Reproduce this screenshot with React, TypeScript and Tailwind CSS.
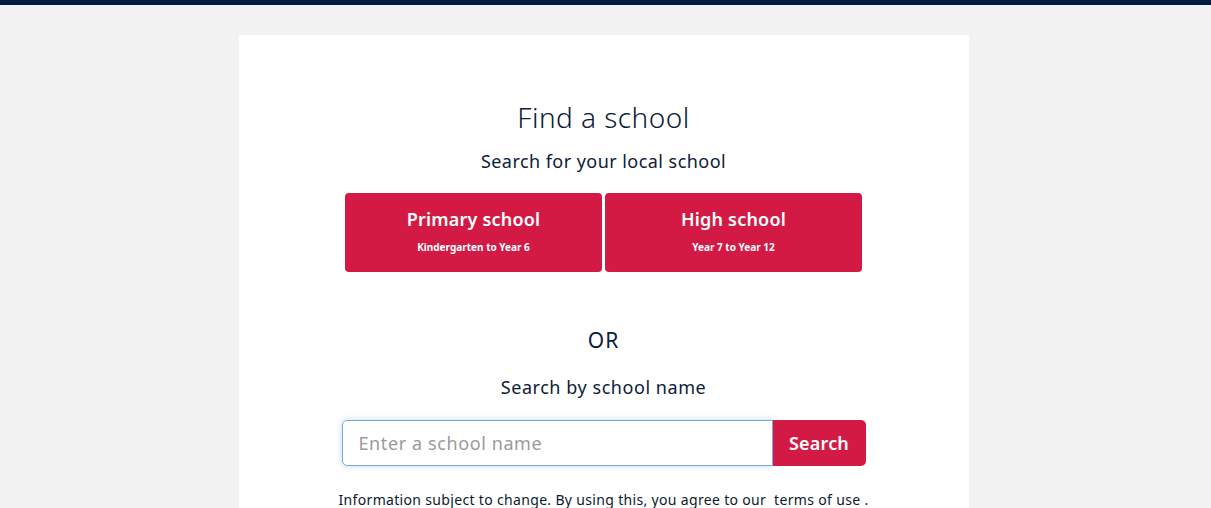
export default function App() {
  return (
    <div className="min-h-screen bg-[#f2f2f2] font-['Noto_Sans',sans-serif] text-[#0c2038]">
      <div className="h-[5px] bg-[#011c3e]" />
      <div className="flex justify-center pt-[30px] pr-[4px]">
        <div className="w-[730px] bg-white flex flex-col items-center pt-[63px] pb-10">
          <h1 className="text-[28px] font-light leading-[38px] tracking-[0.45px]">Find a school</h1>
          <p className="mt-[13px] text-[18px] leading-[24px] tracking-[0.45px]">Search for your local school</p>

          <div className="mt-[20px] flex gap-[3px]">
            <button className="w-[257px] h-[79px] rounded-[4px] bg-[#d31a45] text-white flex flex-col items-center pt-[13px]">
              <span className="text-[18px] font-semibold leading-[26px] tracking-[0.2px]">Primary school</span>
              <span className="mt-[8px] text-[10px] font-bold leading-[14px]">Kindergarten to Year 6</span>
            </button>
            <button className="w-[257px] h-[79px] rounded-[4px] bg-[#d31a45] text-white flex flex-col items-center pt-[13px]">
              <span className="text-[18px] font-semibold leading-[26px] tracking-[0.2px]">High school</span>
              <span className="mt-[8px] text-[10px] font-bold leading-[14px]">Year 7 to Year 12</span>
            </button>
          </div>

          <p className="mt-[54px] text-[21px] leading-[28px] tracking-[1px]">OR</p>
          <p className="mt-[21px] text-[18px] leading-[24px] tracking-[0.55px]">Search by school name</p>

          <div className="mt-[21px] flex">
            <input
              className="w-[431px] h-[46px] rounded-l-[5px] border border-[#74a9dc] shadow-[0_0_6px_rgba(116,169,220,0.45)] px-4 text-[18px] tracking-[0.6px] outline-none placeholder:text-[#9a9a9a]"
              placeholder="Enter a school name"
            />
            <button className="w-[93px] h-[46px] rounded-r-[5px] bg-[#d31a45] text-white text-[18px] font-semibold tracking-[0.2px]">
              Search
            </button>
          </div>

          <p className="mt-[25px] text-[14px] leading-[18px] tracking-[0.33px] text-[#0c1a2c]">
            Information subject to change. By using this, you agree to our&nbsp; terms of use .
          </p>
        </div>
      </div>
    </div>
  )
}
